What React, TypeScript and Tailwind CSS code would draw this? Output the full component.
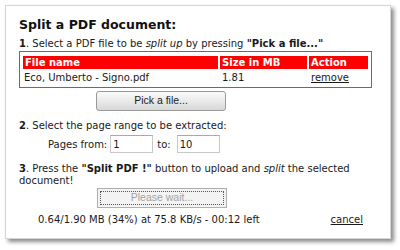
export default function App() {
  return (
    <div className="w-[400px] h-[250px] bg-white pt-[5px] pl-[5px] font-['DejaVu_Sans',Verdana,sans-serif] text-[10px] text-[#1a1a1a]">
      {/* Dialog panel */}
      <div className="w-[386px] h-[234px] border border-[#d6d6d6] bg-white pl-[13px] pt-[11px] shadow-[3px_3px_4px_rgba(0,0,0,0.45)]">
        <h1 className="text-[12.5px] font-bold leading-[15px] text-[#111]">Split a PDF document:</h1>

        {/* Step 1 */}
        <p className="mt-[6px] leading-[12px]">
          <b>1</b>. Select a PDF file to be <i>split up</i> by pressing <b>"Pick a file..."</b>
        </p>
        <div className="mt-[1px] w-[353px] border border-[#6b6b6b] px-[3px] pt-[4px] pb-[2px]">
          <div className="grid grid-cols-[195px_87px_1fr] gap-x-[2px] gap-y-[2px]">
            <div className="h-[13px] leading-[13px] bg-[#ff0000] pl-[2px] font-bold text-white">File name</div>
            <div className="h-[13px] leading-[13px] bg-[#ff0000] pl-[2px] font-bold text-white">Size in MB</div>
            <div className="h-[13px] leading-[13px] bg-[#ff0000] pl-[2px] font-bold text-white">Action</div>
            <div className="h-[14px] leading-[14px] pl-[1px]">Eco, Umberto - Signo.pdf</div>
            <div className="h-[14px] leading-[14px] pl-[2px]">1.81</div>
            <div className="h-[14px] leading-[14px] pl-[2px] underline">remove</div>
          </div>
        </div>
        <button className="ml-[77px] mt-[3px] flex w-[130px] h-[20px] items-center justify-center rounded-[3px] border border-[#9a9a9a] bg-linear-to-b from-[#fbfbfb] to-[#d8d8d8] font-['Liberation_Sans',Arial,sans-serif] text-[10.5px] text-[#222]">
          Pick a file...
        </button>

        {/* Step 2 */}
        <p className="mt-[9px] leading-[12px]">
          <b>2</b>. Select the page range to be extracted:
        </p>
        <div className="ml-[29px] mt-[3px] flex h-[18px] items-center">
          <span>Pages from:</span>
          <input
            readOnly
            defaultValue="1"
            className="ml-[3px] h-[18px] w-[43px] border border-[#c9c9c9] border-t-[#a9a9a9] bg-white pl-[2px] text-[10px] font-['DejaVu_Sans',sans-serif] outline-none"
          />
          <span className="ml-[4px]">to:</span>
          <input
            readOnly
            defaultValue="10"
            className="ml-[6px] h-[18px] w-[43px] border border-[#c9c9c9] border-t-[#a9a9a9] bg-white pl-[2px] text-[10px] font-['DejaVu_Sans',sans-serif] outline-none"
          />
        </div>

        {/* Step 3 */}
        <p className="mt-[10px] leading-[11.6px]">
          <b>3</b>. Press the <b>"Split PDF !"</b> button to upload and <i>split</i> the selected
          <br />
          document!
        </p>
        <div className="ml-[78px] mt-[2px] w-[130px] h-[20px] border border-[#b0b0b0] bg-[#f3f3f3] p-[2px]">
          <div className="flex h-full items-center justify-center border border-dotted border-[#555] font-['Liberation_Sans',Arial,sans-serif] text-[10.5px] text-[#a3a3a3]">
            Please wait...
          </div>
        </div>

        {/* Progress */}
        <div className="ml-[19px] mt-[6px] flex w-[325px] justify-between leading-[12px]">
          <span>0.64/1.90 MB (34%) at 75.8 KB/s - 00:12 left</span>
          <span className="underline">cancel</span>
        </div>
      </div>
    </div>
  );
}
